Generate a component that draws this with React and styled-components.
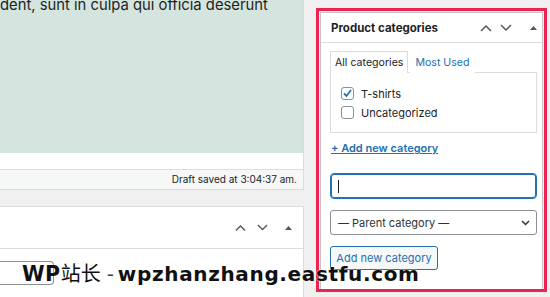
import React from 'react';
import styled, { createGlobalStyle } from 'styled-components';

const GlobalStyle = createGlobalStyle`
  html, body {
    margin: 0;
    padding: 0;
    background: #f0f0f1;
    overflow: hidden;
  }
  body {
    font-family: Inter, "Noto Sans", sans-serif;
    color: #1d2327;
  }
`;

const Page = styled.div`
  position: relative;
  display: flex;
  align-items: flex-start;
  width: 550px;
  height: 297px;
  overflow: hidden;
`;

const LeftCol = styled.div`
  width: 304px;
  flex-shrink: 0;
  display: flex;
  flex-direction: column;
  height: 297px;
`;

const EditorBox = styled.div`
  border-right: 1px solid #dcdcde;
  border-bottom: 1px solid #dcdcde;
  background: #fff;
`;

const GreenArea = styled.div`
  height: 153px;
  background: #d4e4de;
  overflow: hidden;
`;

const BodyText = styled.p`
  margin: -5px 0 0 0;
  font-size: 14.8px;
  line-height: 20px;
  color: #1e1e1e;
  white-space: nowrap;
`;

const WhiteStrip = styled.div`
  height: 16px;
  border-bottom: 1px solid #dcdcde;
`;

const StatusBar = styled.div`
  height: 19px;
  line-height: 19px;
  background: #f6f7f7;
  text-align: right;
  padding-right: 6px;
  font-size: 10px;
  color: #1d2327;
`;

const MetaBox = styled.div`
  margin-top: 16px;
  flex: 1;
  background: #fff;
  border-top: 1px solid #dcdcde;
  border-right: 1px solid #dcdcde;
`;

const BoxHeader = styled.div`
  display: flex;
  align-items: center;
  justify-content: ${p => (p.spread ? 'space-between' : 'flex-end')};
  height: ${p => p.h}px;
  border-bottom: 1px solid #dcdcde;
  padding: 0 ${p => p.pr}px 0 10px;
`;

const Title = styled.h2`
  margin: 0;
  font-size: 11.5px;
  font-weight: 700;
  color: #1d2327;
`;

const Handles = styled.div`
  display: flex;
  align-items: center;
  gap: ${p => p.gap}px;
`;

const Toggle = styled.span`
  display: flex;
  margin-left: ${p => p.offset}px;
`;

const MetaBody = styled.div`
  padding-top: 12px;
`;

const StubInput = styled.div`
  width: 53px;
  height: 22px;
  border: 1px solid #8c8f94;
  border-left: none;
  border-radius: 0 4px 4px 0;
`;

const RightCol = styled.div`
  margin: 8px 0 0 12px;
  width: 231px;
  height: 284px;
  box-sizing: border-box;
  border: 3px solid #ec2350;
  padding: 1px 1px 0 1px;
  flex-shrink: 0;
`;

const Panel = styled.div`
  height: 100%;
  background: #fff;
  border: 1px solid #c3c4c7;
  border-bottom: none;
  box-sizing: border-box;
`;

const PanelBody = styled.div`
  padding: 7px 4px 0 9px;
  display: flex;
  flex-direction: column;
  align-items: flex-start;
`;

const Tabs = styled.div`
  display: flex;
  align-items: flex-end;
  height: 22px;
  font-size: 10.6px;
`;

const Tab = styled.div`
  position: relative;
  z-index: 1;
  height: 22px;
  line-height: 21px;
  padding: 0 4px;
  box-sizing: border-box;
  background: #fff;
  color: ${p => (p.active ? '#1d2327' : '#2271b1')};
  border: 1px solid ${p => (p.active ? '#dcdcde' : 'transparent')};
  border-bottom: none;
  margin-right: 2px;
  margin-bottom: -1px;
`;

const TabPanel = styled.div`
  width: 207px;
  height: 61px;
  box-sizing: border-box;
  border: 1px solid #dcdcde;
  padding: 14px 0 0 10px;
  display: flex;
  flex-direction: column;
  gap: 6px;
`;

const CheckRow = styled.label`
  display: flex;
  align-items: center;
  gap: 7px;
  font-size: 11px;
  color: #1d2327;
  height: 13px;
`;

const Box = styled.span`
  width: 13px;
  height: 13px;
  box-sizing: border-box;
  border: 1px solid #8c8f94;
  border-radius: 3px;
  background: #fff;
  display: flex;
  align-items: center;
  justify-content: center;
`;

const AddLink = styled.a`
  margin-top: 8px;
  margin-left: 1px;
  font-size: 11px;
  font-weight: 600;
  color: #2271b1;
  text-decoration: underline;
  line-height: 14px;
`;

const TextField = styled.div`
  margin-top: 18px;
  width: 207px;
  height: 26px;
  box-sizing: border-box;
  border: 1px solid #2271b1;
  box-shadow: 0 0 0 1px #2271b1 inset;
  border-radius: 4px;
  display: flex;
  align-items: center;
  padding-left: 7px;
`;

const Caret = styled.span`
  width: 1px;
  height: 13px;
  background: #1d2327;
`;

const SelectBox = styled.div`
  margin-top: 11px;
  width: 207px;
  height: 25px;
  box-sizing: border-box;
  border: 1px solid #8c8f94;
  border-radius: 3px;
  display: flex;
  align-items: center;
  justify-content: space-between;
  padding: 0 6px 0 7px;
  font-size: 11px;
  color: #2c3338;
`;

const Button = styled.button`
  margin-top: 11px;
  width: 108px;
  height: 24px;
  box-sizing: border-box;
  border: 1px solid #2271b1;
  border-radius: 3px;
  background: #f6f7f7;
  color: #2271b1;
  font-family: inherit;
  font-size: 11px;
  padding: 0;
`;

const Watermark = styled.div`
  position: absolute;
  left: 22px;
  top: 258px;
  display: flex;
  align-items: baseline;
  font-family: "DejaVu Sans", sans-serif;
  font-size: 20px;
  font-weight: 700;
  color: #111;
  white-space: nowrap;
  text-shadow: 0 0 1px #fff, 0 0 1px #fff;
`;

const Brand = styled.span`
  font-size: 20.5px;
  letter-spacing: 0.5px;
`;

const Cjk = styled.span`
  font-family: "Noto Sans CJK SC", sans-serif;
  font-weight: 400;
  font-size: 20px;
`;

const Dash = styled.span`
  font-weight: 400;
  color: #444;
  margin: 0 4px 0 6px;
`;

const Domain = styled.span`
  letter-spacing: 0.65px;
`;

const Chevron = ({ up, size = 12 }) => (
  <svg width={size} height={size / 2 + 2} viewBox="0 0 12 8">
    <polyline
      points={up ? '1,7 6,2 11,7' : '1,1 6,6 11,1'}
      fill="none"
      stroke="#50575e"
      strokeWidth="1.5"
    />
  </svg>
);

const Triangle = () => (
  <svg width="7" height="4" viewBox="0 0 7 4">
    <polygon points="0,4 3.5,0 7,4" fill="#50575e" />
  </svg>
);

export default function App() {
  return (
    <Page>
      <GlobalStyle />
      <LeftCol>
        <EditorBox>
          <GreenArea>
            <BodyText>dent, sunt in culpa qui officia deserunt</BodyText>
          </GreenArea>
          <WhiteStrip />
          <StatusBar>Draft saved at 3:04:37 am.</StatusBar>
        </EditorBox>
        <MetaBox>
          <BoxHeader h={41} pr={11}>
            <Handles gap={11}>
              <Chevron up size={11} />
              <Chevron size={11} />
              <Toggle offset={6}>
                <Triangle />
              </Toggle>
            </Handles>
          </BoxHeader>
          <MetaBody>
            <StubInput />
          </MetaBody>
        </MetaBox>
      </LeftCol>

      <RightCol>
        <Panel>
          <BoxHeader h={29} pr={5} spread>
            <Title>Product categories</Title>
            <Handles gap={8}>
              <Chevron up />
              <Chevron />
              <Toggle offset={10}>
                <Triangle />
              </Toggle>
            </Handles>
          </BoxHeader>
          <PanelBody>
            <Tabs>
              <Tab active>All categories</Tab>
              <Tab>Most Used</Tab>
            </Tabs>
            <TabPanel>
              <CheckRow>
                <Box>
                  <svg width="11" height="11" viewBox="0 0 11 11">
                    <polyline points="2,5.5 4.5,8 9,2" fill="none" stroke="#2271b1" strokeWidth="1.8" />
                  </svg>
                </Box>
                T-shirts
              </CheckRow>
              <CheckRow>
                <Box />
                Uncategorized
              </CheckRow>
            </TabPanel>
            <AddLink>+ Add new category</AddLink>
            <TextField>
              <Caret />
            </TextField>
            <SelectBox>
              <span>— Parent category —</span>
              <svg width="9" height="6" viewBox="0 0 9 6">
                <polyline points="1,1 4.5,4.5 8,1" fill="none" stroke="#2c3338" strokeWidth="1.5" />
              </svg>
            </SelectBox>
            <Button>Add new category</Button>
          </PanelBody>
        </Panel>
      </RightCol>

      <Watermark>
        <Brand>WP</Brand>
        <Cjk>站长</Cjk>
        <Dash>-</Dash>
        <Domain>wpzhanzhang.eastfu.com</Domain>
      </Watermark>
    </Page>
  );
}
